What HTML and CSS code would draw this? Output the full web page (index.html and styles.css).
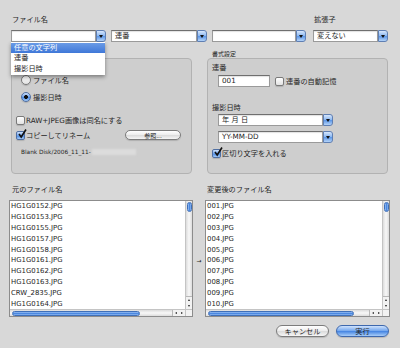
FILE: index.html
```html
<!DOCTYPE html>
<html lang="ja">
<head>
    <meta charset="UTF-8">
    <title>リネーム</title>
    <link rel="stylesheet" href="styles.css">
</head>
<body>
    <div class="dialog">
        <!-- top row: name parts + extension -->
        <div class="top">
            <div class="name-group">
                <div class="label">ファイル名</div>
                <div class="combo-row">
                    <div class="combo name-combo"><span class="combo-text"></span><span class="combo-btn"></span></div>
                    <div class="combo seq-combo"><span class="combo-text">連番</span><span class="combo-btn"></span></div>
                </div>
                <ul class="menu">
                    <li class="selected">任意の文字列</li>
                    <li>連番</li>
                    <li>撮影日時</li>
                </ul>
            </div>
            <div class="combo free-combo"><span class="combo-text"></span><span class="combo-btn"></span></div>
            <div class="ext-group">
                <div class="label">拡張子</div>
                <div class="combo"><span class="combo-text">変えない</span><span class="combo-btn"></span></div>
            </div>
        </div>

        <!-- option boxes -->
        <div class="groups">
            <div class="group">
                <div class="group-title"></div>
                <div class="group-box name-box">
                    <div class="radio-row"><span class="radio"></span>ファイル名</div>
                    <div class="radio-row second"><span class="radio on"></span>撮影日時</div>
                    <div class="check-row raw-row"><span class="check"></span>RAW+JPEG画像は同名にする</div>
                    <div class="check-row copy-row">
                        <span class="check on"><svg viewBox="0 0 10 10" width="10" height="10"><path d="M2 5 L4.2 8 L9 0.5" fill="none" stroke="#111" stroke-width="1.6"/></svg></span>コピーしてリネーム
                        <span class="pill browse">参照...</span>
                    </div>
                    <div class="path-row">Blank Disk/2006_11_11-<span class="blur"></span></div>
                </div>
            </div>
            <div class="group">
                <div class="group-title">書式設定</div>
                <div class="group-box format-box">
                    <div class="sub-label">連番</div>
                    <div class="seq-row">
                        <span class="text-field">001</span>
                        <span class="check"></span>連番の自動記憶
                    </div>
                    <div class="sub-label date-label">撮影日時</div>
                    <div class="combo popup"><span class="combo-text">年 月 日</span><span class="combo-btn"></span></div>
                    <div class="combo popup second"><span class="combo-text">YY-MM-DD</span><span class="combo-btn"></span></div>
                    <div class="check-row sep-row">
                        <span class="check on"><svg viewBox="0 0 10 10" width="10" height="10"><path d="M2 5 L4.2 8 L9 0.5" fill="none" stroke="#111" stroke-width="1.6"/></svg></span>区切り文字を入れる
                    </div>
                </div>
            </div>
        </div>

        <!-- before / after lists -->
        <div class="lists">
            <div class="list-col left-col">
                <div class="list-label">元のファイル名</div>
                <div class="list">
                    <ul class="rows">
                        <li>HG1G0152.JPG</li>
                        <li>HG1G0153.JPG</li>
                        <li>HG1G0155.JPG</li>
                        <li>HG1G0157.JPG</li>
                        <li>HG1G0158.JPG</li>
                        <li>HG1G0161.JPG</li>
                        <li>HG1G0162.JPG</li>
                        <li>HG1G0163.JPG</li>
                        <li>CRW_2835.JPG</li>
                        <li>HG1G0164.JPG</li>
                    </ul>
                    <div class="vscroll"><span class="vthumb"></span><span class="varrows"><i class="up"></i><i class="down"></i></span></div>
                    <div class="hscroll"><span class="hthumb" style="width: 128px"></span><span class="harrows"><i class="lt"></i><i class="rt"></i></span></div>
                    <div class="corner"></div>
                </div>
            </div>
            <div class="arrow">&rarr;</div>
            <div class="list-col right-col">
                <div class="list-label">変更後のファイル名</div>
                <div class="list">
                    <ul class="rows">
                        <li>001.JPG</li>
                        <li>002.JPG</li>
                        <li>003.JPG</li>
                        <li>004.JPG</li>
                        <li>005.JPG</li>
                        <li>006.JPG</li>
                        <li>007.JPG</li>
                        <li>008.JPG</li>
                        <li>009.JPG</li>
                        <li>010.JPG</li>
                    </ul>
                    <div class="vscroll"><span class="vthumb"></span><span class="varrows"><i class="up"></i><i class="down"></i></span></div>
                    <div class="hscroll"><span class="hthumb" style="width: 146px"></span><span class="harrows"><i class="lt"></i><i class="rt"></i></span></div>
                    <div class="corner"></div>
                </div>
            </div>
        </div>

        <div class="buttons">
            <span class="pill cancel">キャンセル</span>
            <span class="pill default">実行</span>
        </div>
    </div>
</body>
</html>
```

FILE: styles.css
```css
/* General */
* {
    box-sizing: border-box;
}

body {
    margin: 0;
    width: 400px;
    height: 348px;
    overflow: hidden;
    background: #d8d8d8;
    font-family: "DejaVu Sans", "Noto Sans CJK JP", sans-serif;
    font-size: 7.2px;
    color: #262626;
}

ul {
    margin: 0;
    padding: 0;
    list-style: none;
}

.dialog {
    padding: 15px 0 0 11px;
}

.label {
    height: 10px;
    line-height: 10px;
    margin-bottom: 5px;
    padding-left: 1px;
}

/* Top row */
.top {
    display: flex;
    align-items: flex-end;
}

.name-group {
    position: relative;
    width: 196px;
}

.combo-row {
    display: flex;
    gap: 5px;
}

.combo {
    display: flex;
    height: 12px;
}

.name-combo {
    width: 95px;
}

.seq-combo {
    width: 96px;
}

.free-combo {
    width: 94px;
    margin-left: 5px;
}

.ext-group {
    width: 75px;
    margin-left: 7px;
}

.combo-text {
    flex: 1;
    background: #fff;
    border: 1px solid #9a9a9a;
    border-top-color: #6f6f6f;
    box-shadow: inset 0 1px 1px rgba(0, 0, 0, 0.12);
    padding-left: 3px;
    line-height: 10px;
    white-space: nowrap;
}

.combo-btn {
    width: 10px;
    display: flex;
    align-items: center;
    justify-content: center;
    background: linear-gradient(#d7e7fc, #8fbaf2 45%, #5f99e8 55%, #b4d3f8);
    border: 1px solid #5f7fb3;
    border-radius: 0 3px 3px 0;
}

.combo-btn::after {
    content: "";
    border-left: 2px solid transparent;
    border-right: 2px solid transparent;
    border-top: 3px solid #111;
}

/* Open popup menu */
.menu {
    position: absolute;
    left: 0;
    top: 27px;
    width: 94px;
    padding: 1px 0;
    background: #fff;
    box-shadow: 0 2px 4px rgba(0, 0, 0, 0.4);
    z-index: 2;
}

.menu li {
    height: 10.3px;
    line-height: 10.3px;
    padding-left: 3px;
}

.menu .selected {
    background: linear-gradient(#6a9be6, #3f78d8);
    color: #fff;
}

/* Group boxes */
.groups {
    display: flex;
    gap: 15px;
    margin-top: 7px;
}

.group {
    width: 181px;
}

.group-title {
    height: 9px;
    line-height: 9px;
    font-size: 6px;
    padding-left: 5px;
}

.group-box {
    height: 116px;
    border: 1px solid #b2b2b2;
    border-radius: 4px;
    background: #cecece;
}

.name-box {
    padding: 15px 0 0 4px;
}

.radio-row,
.check-row {
    display: flex;
    align-items: center;
    height: 12px;
}

.radio-row {
    padding-left: 5px;
    gap: 2px;
}

.radio-row.second {
    margin-top: 5px;
}

.check-row {
    gap: 1px;
}

.raw-row {
    margin-top: 11px;
}

.copy-row {
    margin-top: 3px;
}

.radio {
    width: 10px;
    height: 10px;
    border: 1px solid #7a7a7a;
    border-radius: 50%;
    background: linear-gradient(#fff, #e2e2e2);
    box-shadow: 0 1px 1px rgba(0, 0, 0, 0.15);
}

.radio.on {
    background: radial-gradient(circle, #111 0 1.8px, transparent 2.2px), linear-gradient(#cfe1fb, #6fa3ec 50%, #4c8ce5 55%, #a6cbf7);
    border-color: #4f6fa3;
}

.check {
    position: relative;
    width: 9px;
    height: 9px;
    border: 1px solid #7a7a7a;
    border-radius: 2px;
    background: linear-gradient(#fff, #e2e2e2);
    box-shadow: 0 1px 1px rgba(0, 0, 0, 0.15);
    flex: none;
}

.check.on {
    background: linear-gradient(#cfe1fb, #6fa3ec 50%, #4c8ce5 55%, #a6cbf7);
    border-color: #4f6fa3;
}

.check svg {
    position: absolute;
    left: 0;
    top: -3px;
}

.pill {
    display: flex;
    align-items: center;
    justify-content: center;
    border-radius: 6px;
    border: 1px solid #7c7c7c;
    background: linear-gradient(#fff, #ececec 50%, #dcdcdc 55%, #f6f6f6);
    box-shadow: 0 1px 1px rgba(0, 0, 0, 0.15);
}

.browse {
    width: 56px;
    height: 10px;
    margin-left: auto;
    margin-right: 10px;
    font-size: 6px;
}

.path-row {
    display: flex;
    align-items: center;
    height: 10px;
    margin-top: 6px;
    padding-left: 5px;
    font-size: 5.8px;
}

.blur {
    width: 44px;
    height: 6px;
    margin-left: 1px;
    background: #dcdcdc;
    filter: blur(1px);
}

/* Format box */
.format-box {
    padding: 4px 0 0 4px;
}

.sub-label {
    height: 10px;
    line-height: 10px;
}

.seq-row {
    display: flex;
    align-items: center;
    height: 12px;
    margin-top: 2px;
    padding-left: 6px;
    gap: 2px;
}

.text-field {
    width: 52px;
    height: 12px;
    margin-right: 3px;
    padding-left: 3px;
    line-height: 10px;
    background: #fff;
    border: 1px solid #9a9a9a;
    border-top-color: #6f6f6f;
    box-shadow: inset 0 1px 1px rgba(0, 0, 0, 0.12);
}

.date-label {
    margin-top: 16px;
}

.popup {
    width: 115px;
    margin: 1px 0 0 6px;
}

.popup.second {
    margin-top: 5px;
}

.sep-row {
    margin-top: 4px;
}

/* Lists */
.lists {
    display: flex;
    margin: 11px 0 0 -2px;
}

.left-col {
    width: 184px;
}

.right-col {
    width: 185px;
}

.list-label {
    height: 10px;
    line-height: 10px;
    margin-bottom: 5px;
    padding-left: 2px;
}

.left-col .list-label {
    padding-left: 3px;
}

.arrow {
    width: 12px;
    padding-top: 73px;
    line-height: 6px;
    font-size: 6px;
    text-align: center;
}

.list {
    display: grid;
    grid-template-columns: 1fr 7px;
    grid-template-rows: 1fr 7px;
    height: 117px;
    border: 1px solid #8c8c8c;
    background: #fff;
}

.rows {
    overflow: hidden;
    font-size: 6.9px;
    padding-left: 1px;
}

.rows li {
    height: 10.9px;
    line-height: 10.9px;
}

.vscroll {
    display: flex;
    flex-direction: column;
    justify-content: space-between;
    align-items: center;
    background: linear-gradient(90deg, #dcdcdc, #f8f8f8 50%, #dcdcdc);
    border-left: 1px solid #c4c4c4;
    padding: 1px 0 0;
}

.vthumb {
    width: 5px;
    height: 10px;
    border-radius: 3px;
    border: 1px solid #3f6fb8;
    background: linear-gradient(90deg, #9cc2f5, #4b88e0 50%, #8fb9f2);
}

.varrows,
.harrows {
    display: flex;
    background: #f2f2f2;
}

.varrows {
    flex-direction: column;
    width: 6px;
    border-top: 1px solid #b8b8b8;
}

.varrows i,
.harrows i {
    display: flex;
    align-items: center;
    justify-content: center;
    width: 6px;
    height: 6px;
}

.varrows i::after,
.harrows i::after {
    content: "";
    border: 1.5px solid transparent;
}

.up::after {
    border-bottom: 2px solid #222 !important;
    border-top-width: 0 !important;
}

.down::after {
    border-top: 2px solid #222 !important;
    border-bottom-width: 0 !important;
}

.lt::after {
    border-right: 2px solid #222 !important;
    border-left-width: 0 !important;
}

.rt::after {
    border-left: 2px solid #222 !important;
    border-right-width: 0 !important;
}

.hscroll {
    display: flex;
    justify-content: space-between;
    align-items: center;
    padding-left: 2px;
    border-top: 1px solid #c4c4c4;
    background: linear-gradient(#dcdcdc, #f8f8f8 50%, #dcdcdc);
}

.hthumb {
    height: 5px;
    border-radius: 3px;
    border: 1px solid #3f6fb8;
    background: linear-gradient(#9cc2f5, #4b88e0 50%, #8fb9f2);
}

.harrows {
    border-left: 1px solid #b8b8b8;
    height: 6px;
}

.corner {
    background: #f2f2f2;
    border-top: 1px solid #c4c4c4;
    border-left: 1px solid #c4c4c4;
}

/* Buttons */
.buttons {
    display: flex;
    justify-content: flex-end;
    gap: 7px;
    margin-top: 8px;
    padding-right: 11px;
}

.buttons .pill {
    width: 53px;
    height: 12px;
}

.pill.default {
    border-color: #3e68ad;
    background: linear-gradient(#cfe2fc, #7aabef 45%, #4a88e3 55%, #a8cdf8);
}
```
